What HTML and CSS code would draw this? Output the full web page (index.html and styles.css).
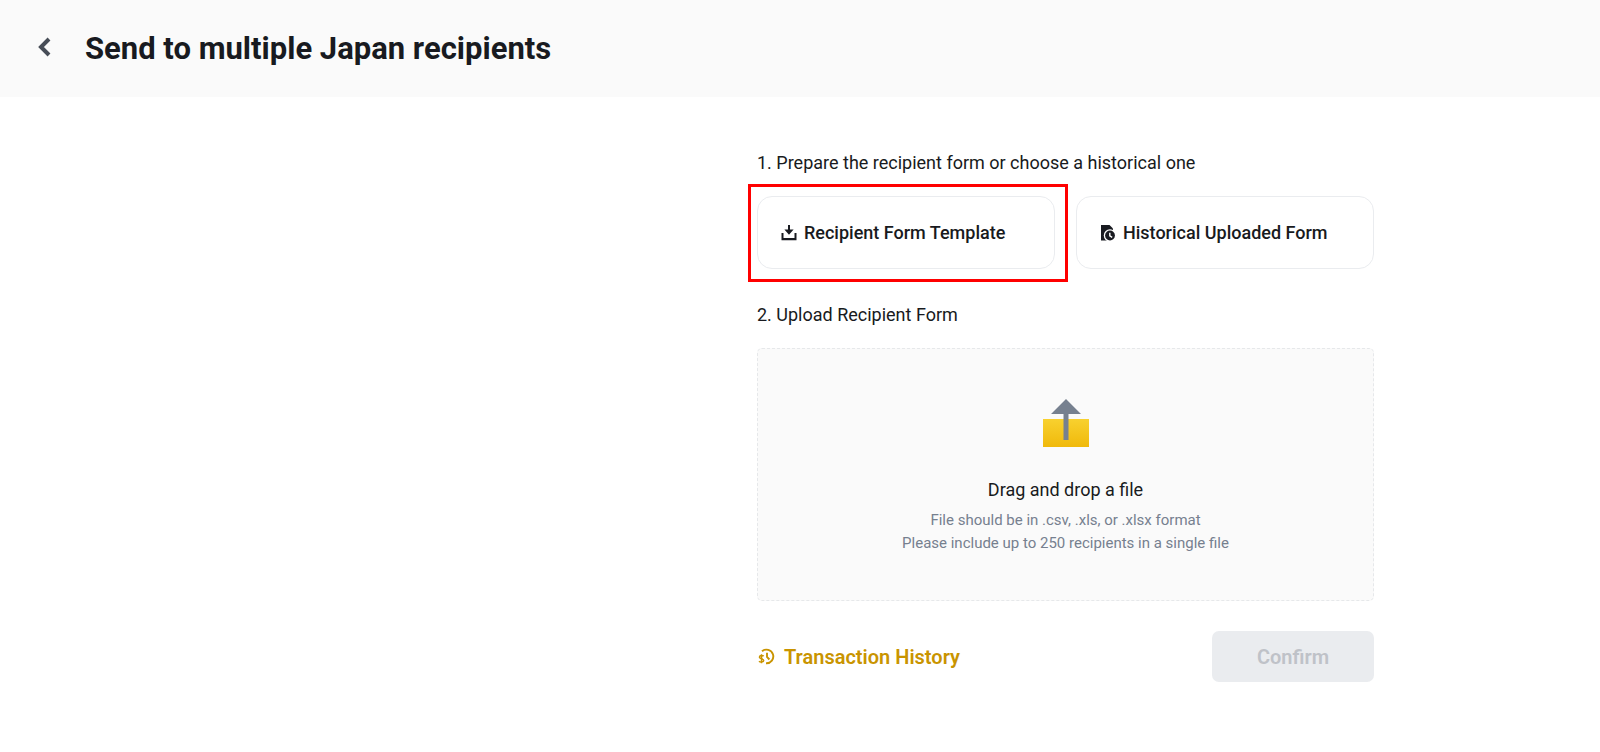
FILE: index.html
```
<!DOCTYPE html>
<html lang="en">
<head>
    <meta charset="UTF-8">
    <meta name="viewport" content="width=device-width, initial-scale=1.0">
    <title>Send to multiple Japan recipients</title>
    <link rel="stylesheet" href="styles.css">
</head>
<body>
    <header class="header">
        <a href="#" class="back" aria-label="Back">
            <svg width="14" height="20" viewBox="0 0 14 20"><path d="M12 2L4 10l8 8" fill="none" stroke="#474d57" stroke-width="4"/></svg>
        </a>
        <h1 class="title">Send to multiple Japan recipients</h1>
    </header>

    <main class="main">
        <form class="form">
            <h2 class="step">1. Prepare the recipient form or choose a historical one</h2>
            <div class="options">
                <button type="button" class="option highlighted">
                    <svg width="16" height="16" viewBox="0 0 16 16" fill="#181a20"><path d="M7 0h2v4.500h3.600L8 9.800 3.400 4.500H7zM.5 8h2v5h11V8h2v7.300H.5z"/></svg>
                    Recipient Form Template
                </button>
                <button type="button" class="option">
                    <svg width="16" height="16" viewBox="0 0 16 16">
                        <path d="M1 0h8.500L13 3.500v12H1z" fill="#181a20"/>
                        <circle cx="10" cy="10.500" r="6.200" fill="#fff"/>
                        <circle cx="10" cy="10.500" r="4.900" fill="#181a20"/>
                        <path d="M9.800 7.700v3.200l2.400 1.500" fill="none" stroke="#fff" stroke-width="1.400"/>
                    </svg>
                    Historical Uploaded Form
                </button>
            </div>

            <h2 class="step">2. Upload Recipient Form</h2>
            <div class="dropzone">
                <svg class="upload-icon" width="48" height="50" viewBox="0 0 48 50">
                    <defs>
                        <linearGradient id="box" x1="0" y1="0" x2="0" y2="1">
                            <stop offset="0" stop-color="#f8d12f"/>
                            <stop offset="1" stop-color="#f0b90b"/>
                        </linearGradient>
                    </defs>
                    <path d="M1 20h46v28H1z" fill="url(#box)"/>
                    <path d="M24 0l15 15H26.500v26h-5V15H9z" fill="#76808f"/>
                </svg>
                <p class="drop-title">Drag and drop a file</p>
                <p class="drop-hint">File should be in .csv, .xls, or .xlsx format</p>
                <p class="drop-hint">Please include up to 250 recipients in a single file</p>
            </div>

            <div class="actions">
                <a href="#" class="history">
                    <svg width="18" height="18" viewBox="0 0 18 18" fill="none" stroke="#c99400">
                        <path d="M4 3.300A6.800 6.800 0 1 1 8 15.200" stroke-width="1.900"/>
                        <path d="M9 4.800v4l2.400 2.700" stroke-width="1.900"/>
                        <path d="M5.600 8.300C4.800 7.200 1.400 7.200 1.400 9.200s4.300 1.200 4.300 3.200S2 14.300 1 13.200M3.500 6.300v9" stroke-width="1.500"/>
                    </svg>
                    Transaction History
                </a>
                <button type="submit" class="confirm" disabled>Confirm</button>
            </div>
        </form>
    </main>
</body>
</html>
```

FILE: styles.css
```
body {
    background-color: #fff;
    color: #181a20;
    font-family: Roboto, "Liberation Sans", sans-serif;
    margin: 0;
}

h1, h2, p {
    margin: 0;
}

svg {
    display: block;
    flex-shrink: 0;
}

.header {
    display: flex;
    align-items: center;
    gap: 34px;
    background-color: #fafafa;
    padding: 29px 36px 28px;
}

.back {
    padding: 0 0 4px 1px;
}

.title {
    font-size: 31px;
    font-weight: 700;
    line-height: 40px;
}

.main {
    display: flex;
    justify-content: flex-end;
    padding: 54px 226px 54px 54px;
}

.form {
    width: 100%;
    max-width: 617px;
}

.step {
    font-size: 18px;
    font-weight: 400;
    line-height: 24px;
}

.options {
    display: grid;
    grid-template-columns: 1fr 1fr;
    gap: 21px;
    margin: 21px 0 34px;
}

.option {
    position: relative;
    display: flex;
    align-items: center;
    gap: 7px;
    height: 73px;
    padding: 0 23px;
    border: 1px solid #eaecef;
    border-radius: 15px;
    background-color: #fff;
    color: #181a20;
    font-family: inherit;
    font-size: 18px;
    font-weight: 500;
    cursor: pointer;
}

/* red frame around the option to pick */
.highlighted::after {
    content: "";
    position: absolute;
    inset: -13px -14px -14px -10px;
    border: 3px solid #f00;
    pointer-events: none;
}

.dropzone {
    display: flex;
    flex-direction: column;
    align-items: center;
    margin: 21px 0 30px;
    padding: 50px 20px 45px;
    border: 1px dashed #e6e8ea;
    border-radius: 5px;
    background-color: #fafafa;
}

.drop-title {
    margin: 29px 0 7px;
    font-size: 18px;
    line-height: 24px;
}

.drop-hint {
    color: #76808f;
    font-size: 15px;
    line-height: 23px;
}

.actions {
    display: flex;
    align-items: center;
    justify-content: space-between;
}

.history {
    display: flex;
    align-items: center;
    gap: 8px;
    padding-left: 1px;
    color: #c99400;
    font-size: 20px;
    font-weight: 600;
    text-decoration: none;
}

.confirm {
    width: 162px;
    height: 51px;
    border: none;
    border-radius: 7px;
    background-color: #eaecef;
    color: #bfc2c8;
    font-family: inherit;
    font-size: 20px;
    font-weight: 600;
}
```
